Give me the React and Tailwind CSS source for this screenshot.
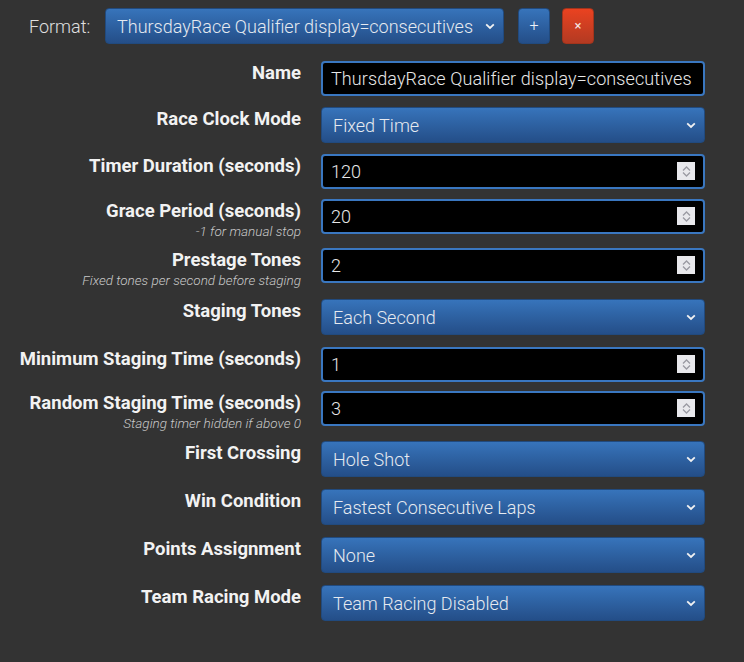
import React from "react";

const font = { fontFamily: "Roboto, 'Noto Sans', sans-serif" };

function Chevron() {
  return (
    <svg width="10" height="7" viewBox="0 0 10 7" className="shrink-0">
      <path d="M1.2 1.4 L5 5 L8.8 1.4" stroke="#f2f2f2" strokeWidth="1.8" fill="none" />
    </svg>
  );
}

function Select({ value, className = "" }) {
  return (
    <div
      className={
        "flex items-center justify-between rounded-[4px] border border-[#214a7e] bg-gradient-to-b from-[#3774bb] to-[#244e88] pl-[11px] pr-[8px] text-[18px] font-light text-[#e6eaf0] " +
        className
      }
    >
      <span className="whitespace-nowrap">{value}</span>
      <Chevron />
    </div>
  );
}

function TextInput({ value }) {
  return (
    <div className="flex h-[35px] w-[384px] items-center rounded-[4px] border-2 border-[#3a77c0] bg-black pl-[8px] text-[18px] font-light tracking-[0.1px] text-[#e8e8e8]">
      <span className="whitespace-nowrap">{value}</span>
    </div>
  );
}

function NumberInput({ value }) {
  return (
    <div className="relative flex h-[35px] w-[384px] items-center rounded-[4px] border-2 border-[#3a77c0] bg-black pl-[8px] text-[18px] font-light text-[#e8e8e8]">
      <span>{value}</span>
      <div className="absolute right-[8px] top-[6px] flex h-[18px] w-[18px] flex-col items-center justify-center gap-[1px] bg-[#e8e8ec]">
        <svg width="9" height="5" viewBox="0 0 9 5">
          <path d="M1 4.5 L4.5 1 L8 4.5" stroke="#9a9aa2" strokeWidth="1.3" fill="none" />
        </svg>
        <svg width="9" height="5" viewBox="0 0 9 5">
          <path d="M1 0.5 L4.5 4 L8 0.5" stroke="#9a9aa2" strokeWidth="1.3" fill="none" />
        </svg>
      </div>
    </div>
  );
}

function Row({ label, sub, h, children }) {
  return (
    <div className={"flex items-start " + h}>
      <div className="flex w-[301px] flex-col items-end pt-[1px] text-right">
        <div className="whitespace-nowrap text-[18.5px] font-bold leading-[22px] text-[#f2f2f2]">{label}</div>
        {sub && (
          <div className="mt-[1px] whitespace-nowrap text-[13.5px] font-light italic leading-[16px] text-[#c8c8c8]">
            {sub}
          </div>
        )}
      </div>
      <div className="ml-[20px]">{children}</div>
    </div>
  );
}

export default function App() {
  return (
    <div className="h-[662px] w-[744px] overflow-hidden bg-[#333333]" style={font}>
      <div className="flex items-center pt-[8px]">
        <div className="ml-[29px] w-[76px] text-[18px] font-light text-[#e0e0e0]">Format:</div>
        <Select value="ThursdayRace Qualifier display=consecutives" className="h-[36px] w-[399px]" />
        <button className="ml-[14px] flex h-[36px] w-[32px] items-center justify-center rounded-[4px] border border-[#214a7e] bg-gradient-to-b from-[#3774bb] to-[#244e88] text-[16px] font-light text-[#eef2f8]">
          +
        </button>
        <button className="ml-[12px] flex h-[36px] w-[32px] items-center justify-center rounded-[4px] border border-[#a3341c] bg-gradient-to-b from-[#ea4220] to-[#b33a22] text-[13px] text-[#f6e8e4]">
          ×
        </button>
      </div>
      <div className="mt-[17px] flex flex-col">
        <Row label="Name" h="h-[46px]">
          <TextInput value="ThursdayRace Qualifier display=consecutives" />
        </Row>
        <Row label="Race Clock Mode" h="h-[47px]">
          <Select value="Fixed Time" className="h-[36px] w-[384px]" />
        </Row>
        <Row label="Timer Duration (seconds)" h="h-[45px]">
          <NumberInput value="120" />
        </Row>
        <Row label="Grace Period (seconds)" sub="-1 for manual stop" h="h-[49px]">
          <NumberInput value="20" />
        </Row>
        <Row label="Prestage Tones" sub="Fixed tones per second before staging" h="h-[51px]">
          <NumberInput value="2" />
        </Row>
        <Row label="Staging Tones" h="h-[48px]">
          <Select value="Each Second" className="h-[36px] w-[384px]" />
        </Row>
        <Row label="Minimum Staging Time (seconds)" h="h-[44px]">
          <NumberInput value="1" />
        </Row>
        <Row label="Random Staging Time (seconds)" sub="Staging timer hidden if above 0" h="h-[50px]">
          <NumberInput value="3" />
        </Row>
        <Row label="First Crossing" h="h-[48px]">
          <Select value="Hole Shot" className="h-[36px] w-[384px]" />
        </Row>
        <Row label="Win Condition" h="h-[48px]">
          <Select value="Fastest Consecutive Laps" className="h-[36px] w-[384px]" />
        </Row>
        <Row label="Points Assignment" h="h-[48px]">
          <Select value="None" className="h-[36px] w-[384px]" />
        </Row>
        <Row label="Team Racing Mode" h="h-[48px]">
          <Select value="Team Racing Disabled" className="h-[36px] w-[384px]" />
        </Row>
      </div>
    </div>
  );
}
